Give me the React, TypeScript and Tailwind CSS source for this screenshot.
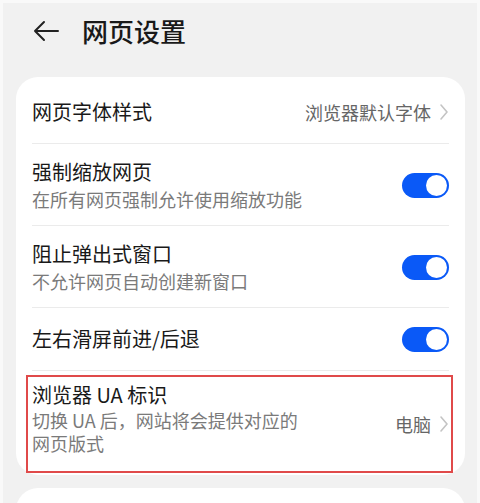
import React from 'react';

const font = { fontFamily: '"Noto Sans CJK SC", "Noto Sans", sans-serif' };

function Toggle() {
  return (
    <div className="w-[47px] h-[25px] rounded-full bg-[#0a59f7] flex items-center justify-end pr-[2px] shrink-0">
      <div className="w-[21px] h-[21px] rounded-full bg-white" />
    </div>
  );
}

function Chevron() {
  return (
    <svg width="10" height="18" viewBox="0 0 10 18" className="ml-[8px] shrink-0">
      <path d="M2 2l6 7-6 7" fill="none" stroke="#c4c4c4" strokeWidth="1.6" strokeLinecap="round" strokeLinejoin="round" />
    </svg>
  );
}

function Divider() {
  return <div className="h-px bg-[#ebebeb]" />;
}

function SwitchRow({ title, sub }: { title: string; sub: string }) {
  return (
    <div className="flex items-center justify-between pt-[14px] pb-[13px]">
      <div>
        <div className="text-[20px] leading-[28px] text-[#191919]">{title}</div>
        <div className="text-[18px] leading-[26px] text-[#7a7a7a]">{sub}</div>
      </div>
      <Toggle />
    </div>
  );
}

export default function App() {
  return (
    <div
      className="w-[480px] h-[503px] overflow-hidden bg-[#f1f1f1] border-x-[3px] border-t-[3px] border-[#f9f9f9]"
      style={font}
    >
      {/* Header */}
      <div className="h-[56px] flex items-center">
        <svg width="28" height="22" viewBox="0 0 28 22" className="ml-[29px]">
          <path d="M26 11H3M12 2L3 11l9 9" fill="none" stroke="#222" strokeWidth="2" strokeLinecap="round" strokeLinejoin="round" />
        </svg>
        <h1 className="ml-[22px] text-[26px] font-medium text-[#191919] leading-none">网页设置</h1>
      </div>

      {/* Card */}
      <div className="mt-[18px] ml-[13px] w-[449px] bg-white rounded-[22px] px-4">
        <div className="h-[66px] pt-1 flex items-center justify-between">
          <span className="text-[20px] text-[#191919]">网页字体样式</span>
          <div className="flex items-center">
            <span className="text-[18px] text-[#666]">浏览器默认字体</span>
            <Chevron />
          </div>
        </div>
        <Divider />
        <SwitchRow title="强制缩放网页" sub="在所有网页强制允许使用缩放功能" />
        <Divider />
        <SwitchRow title="阻止弹出式窗口" sub="不允许网页自动创建新窗口" />
        <Divider />
        <div className="h-[62px] flex items-center justify-between">
          <span className="text-[20px] text-[#191919]">左右滑屏前进/后退</span>
          <Toggle />
        </div>
        <Divider />
        <div className="relative h-[104px] pt-[10px] flex justify-between">
          <div>
            <div className="text-[20px] leading-[28px] text-[#191919]">浏览器 UA 标识</div>
            <div className="w-[280px] text-[18px] leading-[23px] text-[#7a7a7a]">切换 UA 后，网站将会提供对应的网页版式</div>
          </div>
          <div className="flex items-center pb-[8px]">
            <span className="text-[18px] text-[#666]">电脑</span>
            <Chevron />
          </div>
          <div className="absolute left-[-6px] right-[-4px] top-[4px] bottom-[2px] border-2 border-[#e04a4a] pointer-events-none" />
        </div>
      </div>

      {/* Next card */}
      <div className="mt-[13px] ml-[13px] w-[449px] h-[40px] bg-white rounded-t-[22px]" />
    </div>
  );
}
